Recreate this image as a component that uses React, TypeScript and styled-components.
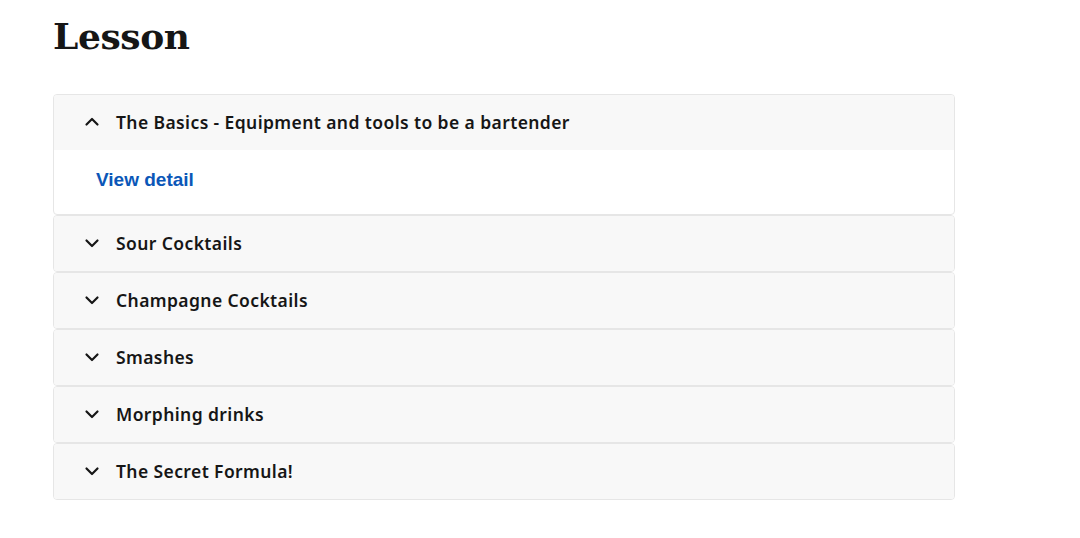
import React, { useState } from "react";
import styled, { createGlobalStyle } from "styled-components";

const Global = createGlobalStyle`
  html, body { margin: 0; padding: 0; background: #ffffff; }
  body { font-family: "Noto Sans", sans-serif; color: #161616; }
`;

const Page = styled.main`
  padding: 14px 0 0 53px;
  width: 902px;
`;

const Title = styled.h1`
  margin: 0 0 36px 0;
  font-family: "DejaVu Serif", serif;
  font-weight: 700;
  font-size: 36px;
  line-height: 44px;
  color: #161616;
  letter-spacing: -0.4px;
`;

const List = styled.div`
  display: flex;
  flex-direction: column;
`;

const Item = styled.section`
  border: 1px solid #e6e6e6;
  border-radius: 4px;
  overflow: hidden;
  background: #ffffff;
`;

const Header = styled.button`
  box-sizing: border-box;
  display: flex;
  align-items: center;
  gap: 16px;
  width: 100%;
  height: 55px;
  padding: 0 0 2px 30px;
  border: none;
  background: #f8f8f8;
  font-family: "Noto Sans", sans-serif;
  font-weight: 600;
  font-size: 17.5px;
  letter-spacing: 0.4px;
  color: #161616;
  cursor: pointer;
  text-align: left;
`;

const Chevron = styled.svg<{ $open: boolean }>`
  width: 16px;
  height: 16px;
  flex: none;
  transform: rotate(${(p) => (p.$open ? "180deg" : "0deg")});
`;

const Body = styled.div`
  padding: 19px 42px 23px 42px;
`;

const Link = styled.a`
  font-family: "Liberation Sans", Arial, sans-serif;
  font-weight: 700;
  font-size: 19px;
  line-height: 22px;
  color: #0b57b8;
  text-decoration: none;
`;

const lessons = [
  "The Basics - Equipment and tools to be a bartender",
  "Sour Cocktails",
  "Champagne Cocktails",
  "Smashes",
  "Morphing drinks",
  "The Secret Formula!",
];

export default function App() {
  const [open, setOpen] = useState(0);
  return (
    <>
      <Global />
      <Page>
        <Title>Lesson</Title>
        <List>
          {lessons.map((l, i) => (
            <Item key={l}>
              <Header onClick={() => setOpen(open === i ? -1 : i)}>
                <Chevron $open={open === i} viewBox="0 0 16 16">
                  <path d="M2.5 5.5 L8 11 L13.5 5.5" fill="none" stroke="#161616" strokeWidth="2.2" strokeLinecap="round" strokeLinejoin="round" />
                </Chevron>
                {l}
              </Header>
              {open === i && (
                <Body>
                  <Link href="#">View detail</Link>
                </Body>
              )}
            </Item>
          ))}
        </List>
      </Page>
    </>
  );
}
